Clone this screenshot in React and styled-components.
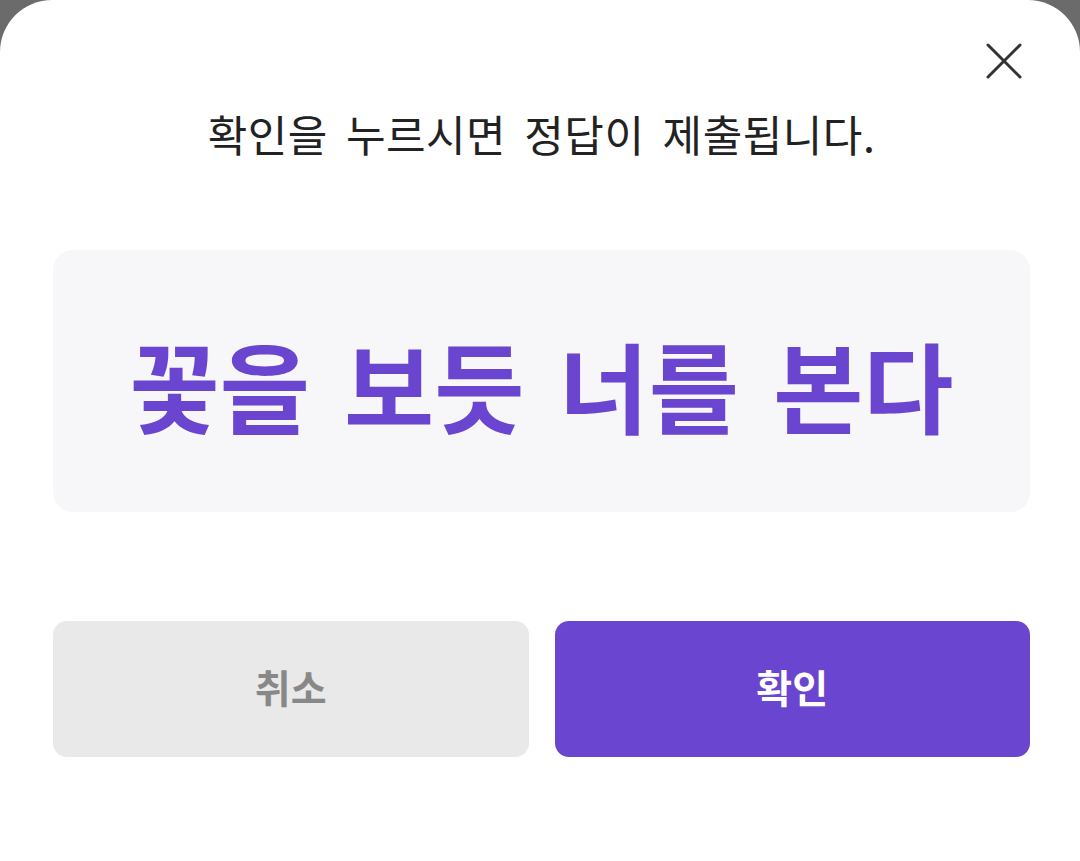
import React from 'react';
import styled, { createGlobalStyle } from 'styled-components';

const GlobalStyle = createGlobalStyle`
  html, body {
    margin: 0;
    padding: 0;
    background: #6b6b6b;
  }
  * {
    box-sizing: border-box;
  }
`;

const Sheet = styled.div`
  position: relative;
  height: 861px;
  background: #ffffff;
  border-radius: 52px 52px 0 0;
  padding: 0 50px 0 53px;
  display: flex;
  flex-direction: column;
  font-family: "Noto Sans CJK KR", "Noto Sans", sans-serif;
`;

const CloseButton = styled.button`
  position: absolute;
  top: 42px;
  right: 57px;
  width: 38px;
  height: 38px;
  padding: 0;
  border: none;
  background: transparent;
  cursor: pointer;
`;

const Title = styled.h2`
  margin: 103px 0 0;
  text-align: center;
  font-size: 43px;
  font-weight: 400;
  letter-spacing: 0.5px;
  word-spacing: 8px;
  line-height: 60px;
  color: #222222;
`;

const AnswerBox = styled.div`
  margin-top: 87px;
  height: 262px;
  padding-top: 4px;
  border-radius: 20px;
  background: #f7f6f8;
  display: flex;
  align-items: center;
  justify-content: center;
`;

const Answer = styled.span`
  font-size: 98px;
  font-weight: 700;
  color: #6a45cf;
  word-spacing: 12px;
  line-height: 1;
`;

const Actions = styled.div`
  margin-top: 109px;
  display: grid;
  grid-template-columns: 1fr 1fr;
  gap: 26px;
`;

const Button = styled.button`
  height: 136px;
  padding: 0 0 6px;
  border: none;
  border-radius: 14px;
  font-family: inherit;
  font-size: 39px;
  font-weight: 700;
  background: ${(p) => (p.$primary ? '#6a45cf' : '#e9e9e9')};
  color: ${(p) => (p.$primary ? '#ffffff' : '#888888')};
  cursor: pointer;
`;

const App = () => (
  <>
    <GlobalStyle />
    <Sheet>
      <CloseButton aria-label="닫기">
        <svg width="38" height="38" viewBox="0 0 38 38">
          <path d="M3 3 L35 35 M35 3 L3 35" stroke="#333333" strokeWidth="3" strokeLinecap="round" />
        </svg>
      </CloseButton>
      <Title>확인을 누르시면 정답이 제출됩니다.</Title>
      <AnswerBox>
        <Answer>꽃을 보듯 너를 본다</Answer>
      </AnswerBox>
      <Actions>
        <Button>취소</Button>
        <Button $primary>확인</Button>
      </Actions>
    </Sheet>
  </>
);

export default App;
